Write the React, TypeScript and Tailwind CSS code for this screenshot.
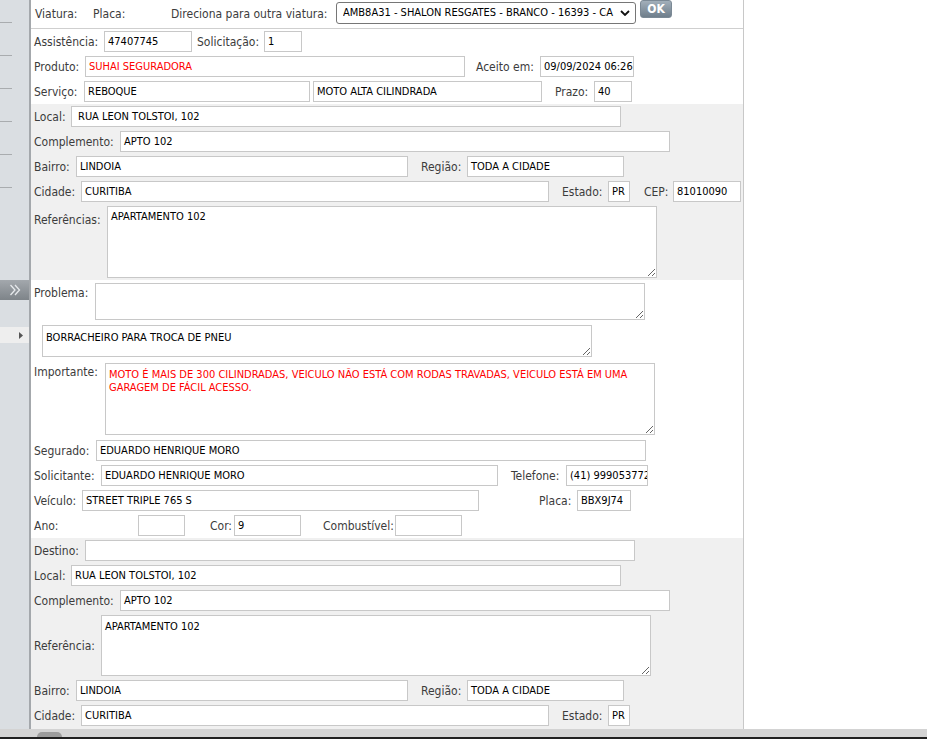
import React from "react";

function L({ c = "", children }: { c?: string; children: React.ReactNode }) {
  return (
    <span className={`shrink-0 whitespace-nowrap text-[12px] leading-[15px] pt-[2px] text-[#3c3c3c] ${c}`}>{children}</span>
  );
}

function I({ c = "", v = "", red = false }: { c?: string; v?: string; red?: boolean }) {
  return (
    <div
      className={`shrink-0 h-[21px] border border-[#c8c8c8] bg-white pl-[3px] text-[11px] leading-[20px] overflow-hidden whitespace-nowrap ${
        red ? "text-[#ff0000]" : "text-black"
      } ${c}`}
    >
      {v}
    </div>
  );
}

function T({ c = "", v = "", red = false }: { c?: string; v?: string; red?: boolean }) {
  return (
    <textarea
      readOnly
      defaultValue={v}
      className={`shrink-0 block border border-[#c8c8c8] bg-white pl-[3px] pr-[3px] pt-[3px] text-[11px] leading-[13px] outline-none resize ${
        red ? "text-[#ff0000]" : "text-black"
      } ${c}`}
    />
  );
}

function Row({ children, c = "" }: { children: React.ReactNode; c?: string }) {
  return <div className={`flex items-center h-[25px] pl-[3px] ${c}`}>{children}</div>;
}

function Sidebar() {
  return (
    <div className="w-[31px] shrink-0 bg-[#dadee2] border-r-2 border-[#a4a8ac] flex flex-col">
      <div className="mt-[22px] h-px w-[12px] bg-[#a9acaf]" />
      <div className="mt-[32px] h-px w-[12px] bg-[#a9acaf]" />
      <div className="mt-[32px] h-px w-[12px] bg-[#a9acaf]" />
      <div className="mt-[32px] h-px w-[12px] bg-[#a9acaf]" />
      <div className="mt-[32px] h-px w-[12px] bg-[#a9acaf]" />
      <div className="mt-[32px] h-px w-[12px] bg-[#a9acaf]" />
      <div className="mt-[92px] h-[20px] w-full bg-gradient-to-b from-[#a3a8ad] to-[#7e8489] flex items-center justify-center">
        <svg width="12" height="12" viewBox="0 0 12 12" fill="none">
          <polyline points="1.5,1 6,6 1.5,11" stroke="#e6e9ec" strokeWidth="1.3" />
          <polyline points="6,1 10.5,6 6,11" stroke="#e6e9ec" strokeWidth="1.3" />
        </svg>
      </div>
      <div className="mt-[27px] h-[16px] w-full bg-[#eeeeee] flex items-center justify-end pr-[6px]">
        <svg width="4" height="7" viewBox="0 0 4 7">
          <polygon points="0,0 4,3.5 0,7" fill="#555555" />
        </svg>
      </div>
    </div>
  );
}

function Main() {
  return (
    <div className="w-[713px] shrink-0 border-r border-[#c8c8c8] flex flex-col bg-white">
      {/* top row */}
      <div className="h-[29px] border-b border-[#cfcfcf] flex items-start pl-[4px] shrink-0">
        <L c="w-[58px] mt-[5px]">Viatura:</L>
        <L c="w-[78px] mt-[5px]">Placa:</L>
        <L c="w-[165px] mt-[5px]">Direciona para outra viatura:</L>
        <div className="mt-[2px] w-[300px] h-[22px] border border-[#767676] rounded-[3px] bg-white flex items-center pl-[6px] pr-[3px]">
          <span className="flex-1 overflow-hidden whitespace-nowrap text-[11px] text-black leading-[20px]">
            AMB8A31 - SHALON RESGATES - BRANCO - 16393 - CA
          </span>
          <svg width="10" height="6" viewBox="0 0 10 6" className="ml-[4px] mr-[2px] shrink-0">
            <polyline points="1,1 5,5 9,1" fill="none" stroke="#111" strokeWidth="1.8" />
          </svg>
        </div>
        <div className="ml-[4px] w-[32px] h-[18px] rounded-[3px] border border-[#7b8995] bg-gradient-to-b from-[#a2afba] to-[#6f7e8b] flex items-center justify-center text-[12px] font-bold text-white leading-none">
          OK
        </div>
      </div>

      {/* white block 1 */}
      <Row>
        <L c="w-[70px]">Assistência:</L>
        <I c="w-[88px]" v="47407745" />
        <L c="ml-[5px] w-[67px]">Solicitação:</L>
        <I c="w-[38px]" v="1" />
      </Row>
      <Row>
        <L c="w-[51px]">Produto:</L>
        <I c="w-[380px]" v="SUHAI SEGURADORA" red />
        <L c="ml-[11px] w-[64px]">Aceito em:</L>
        <I c="w-[94px]" v="09/09/2024 06:26" />
      </Row>
      <Row>
        <L c="w-[50px]">Serviço:</L>
        <I c="w-[226px]" v="REBOQUE" />
        <I c="ml-[3px] w-[229px]" v="MOTO ALTA CILINDRADA" />
        <L c="ml-[13px] w-[39px]">Prazo:</L>
        <I c="w-[38px]" v="40" />
      </Row>

      {/* grey block 1 */}
      <div className="bg-[#f0f0f0] shrink-0">
        <Row>
          <L c="w-[37px]">Local:</L>
          <I c="w-[550px] pl-[6px]" v="RUA LEON TOLSTOI, 102" />
        </Row>
        <Row>
          <L c="w-[86px]">Complemento:</L>
          <I c="w-[550px]" v="APTO 102" />
        </Row>
        <Row>
          <L c="w-[42px]">Bairro:</L>
          <I c="w-[332px]" v="LINDOIA" />
          <L c="ml-[13px] w-[46px]">Região:</L>
          <I c="w-[157px]" v="TODA A CIDADE" />
        </Row>
        <Row>
          <L c="w-[47px]">Cidade:</L>
          <I c="w-[468px]" v="CURITIBA" />
          <L c="ml-[13px] w-[46px]">Estado:</L>
          <I c="w-[22px] pl-[2px]" v="PR" />
          <L c="ml-[14px] w-[29px]">CEP:</L>
          <I c="w-[68px]" v="81010090" />
        </Row>
        <div className="flex items-start pl-[3px] pt-[2px] pb-[2px]">
          <L c="w-[73px] mt-[5px]">Referências:</L>
          <T c="w-[550px] h-[72px]" v="APARTAMENTO 102" />
        </div>
      </div>

      {/* white block 2 */}
      <div className="shrink-0 bg-white">
        <div className="flex items-start pl-[3px] pt-[3px]">
          <L c="w-[61px] mt-[1px]">Problema:</L>
          <T c="w-[550px] h-[37px]" v="" />
        </div>
        <div className="flex items-start pl-[11px] pt-[5px]">
          <T c="w-[550px] h-[32px] pt-[5px]" v="BORRACHEIRO PARA TROCA DE PNEU" />
        </div>
        <div className="flex items-start pl-[3px] pt-[6px]">
          <L c="w-[71px]">Importante:</L>
          <T
            c="w-[550px] h-[72px] pt-[4px]"
            red
            v={"MOTO É MAIS DE 300 CILINDRADAS, VEICULO NÃO ESTÁ COM RODAS TRAVADAS, VEICULO ESTÁ EM UMA\nGARAGEM DE FÁCIL ACESSO."}
          />
        </div>
        <div className="h-[3px]" />
        <Row>
          <L c="w-[62px]">Segurado:</L>
          <I c="w-[550px]" v="EDUARDO HENRIQUE MORO" />
        </Row>
        <Row>
          <L c="w-[67px]">Solicitante:</L>
          <I c="w-[397px]" v="EDUARDO HENRIQUE MORO" />
          <L c="ml-[13px] w-[55px]">Telefone:</L>
          <I c="w-[82px]" v="(41) 999053772" />
        </Row>
        <Row>
          <L c="w-[48px]">Veículo:</L>
          <I c="w-[397px]" v="STREET TRIPLE 765 S" />
          <L c="ml-[60px] w-[38px]">Placa:</L>
          <I c="w-[54px]" v="BBX9J74" />
        </Row>
        <Row>
          <L c="w-[104px]">Ano:</L>
          <I c="w-[47px]" v="" />
          <L c="ml-[25px] w-[24px]">Cor:</L>
          <I c="w-[67px] pl-[2px]" v="9" />
          <L c="ml-[22px] w-[72px]">Combustível:</L>
          <I c="w-[67px]" v="" />
        </Row>
      </div>

      {/* grey block 2 */}
      <div className="flex-1 bg-[#f0f0f0]">
        <Row>
          <L c="w-[51px]">Destino:</L>
          <I c="w-[550px]" v="" />
        </Row>
        <Row>
          <L c="w-[37px]">Local:</L>
          <I c="w-[550px]" v="RUA LEON TOLSTOI, 102" />
        </Row>
        <Row>
          <L c="w-[86px]">Complemento:</L>
          <I c="w-[550px]" v="APTO 102" />
        </Row>
        <div className="flex items-center pl-[3px] pt-[2px] pb-[2px]">
          <L c="w-[67px]">Referência:</L>
          <T c="w-[550px] h-[61px] pt-[4px]" v="APARTAMENTO 102" />
        </div>
        <Row>
          <L c="w-[42px]">Bairro:</L>
          <I c="w-[332px]" v="LINDOIA" />
          <L c="ml-[13px] w-[46px]">Região:</L>
          <I c="w-[157px]" v="TODA A CIDADE" />
        </Row>
        <Row>
          <L c="w-[47px]">Cidade:</L>
          <I c="w-[468px]" v="CURITIBA" />
          <L c="ml-[13px] w-[46px]">Estado:</L>
          <I c="w-[22px] pl-[2px]" v="PR" />
        </Row>
      </div>
    </div>
  );
}

export default function App() {
  return (
    <div className="h-[739px] w-full flex flex-col overflow-hidden bg-white font-['DejaVu_Sans_Condensed','DejaVu_Sans',sans-serif]">
      <div className="flex flex-1 min-h-0">
        <Sidebar />
        <Main />
        <div className="flex-1 bg-white" />
      </div>
      <div className="h-[8px] shrink-0 bg-[#d3d3d3] flex items-end">
        <div className="ml-[37px] w-[25px] h-[5px] rounded-t-full bg-[#9c9c9c]" />
      </div>
      <div className="h-[2px] shrink-0 bg-[#1f1f1f]" />
    </div>
  );
}
